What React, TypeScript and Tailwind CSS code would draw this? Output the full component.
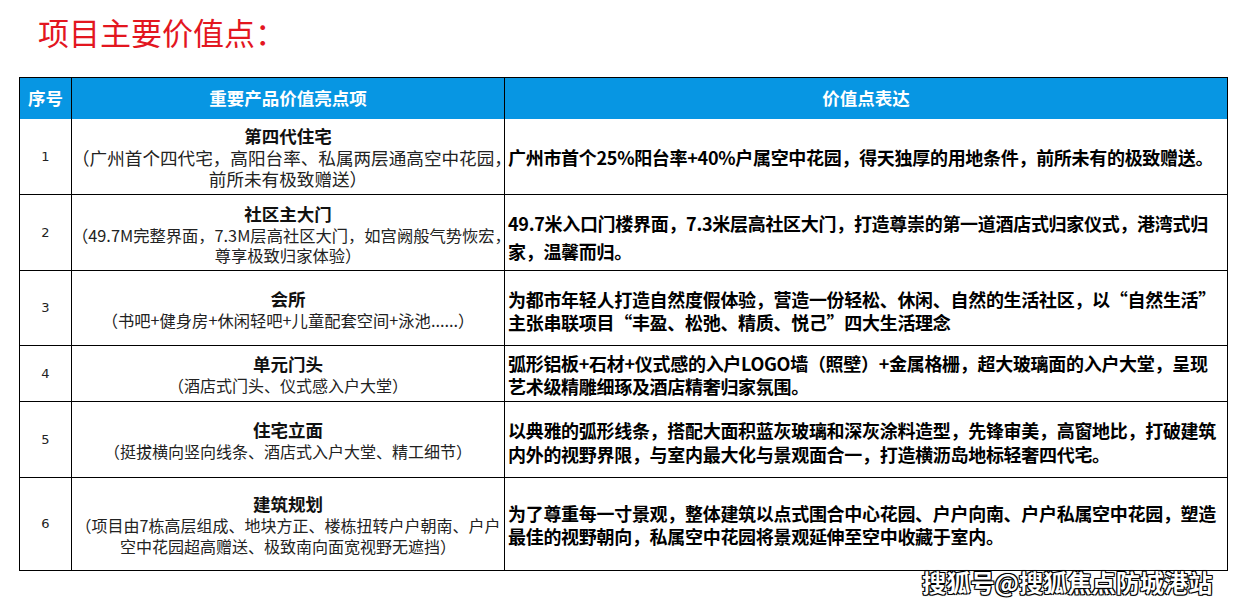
import React from "react";

const cjk = "font-['Noto_Sans_CJK_SC','Noto_Sans',sans-serif]";

type Row = {
  no: string;
  h: string;
  title: string;
  sub: string[];
  subSize: string;
  desc: string[];
  descLead: string;
  descPad: string;
};

const rows: Row[] = [
  {
    no: "1",
    h: "h-[76px]",
    title: "第四代住宅",
    sub: ["（广州首个四代宅，高阳台率、私属两层通高空中花园，", "前所未有极致赠送）"],
    subSize: "text-[17.6px] leading-[21px]",
    desc: ["广州市首个25%阳台率+40%户属空中花园，得天独厚的用地条件，前所未有的极致赠送。"],
    descLead: "leading-[24px]",
    descPad: "pt-[2px]",
  },
  {
    no: "2",
    h: "h-[76px]",
    title: "社区主大门",
    sub: ["（49.7M完整界面，7.3M层高社区大门，如宫阙般气势恢宏，", "尊享极致归家体验）"],
    subSize: "text-[16.3px] leading-[20px]",
    desc: ["49.7米入口门楼界面，7.3米层高社区大门，打造尊崇的第一道酒店式归家仪式，港湾式归", "家，温馨而归。"],
    descLead: "leading-[28px]",
    descPad: "pt-[8px]",
  },
  {
    no: "3",
    h: "h-[75px]",
    title: "会所",
    sub: ["（书吧+健身房+休闲轻吧+儿童配套空间+泳池......）"],
    subSize: "text-[16.3px] leading-[21px]",
    desc: ["为都市年轻人打造自然度假体验，营造一份轻松、休闲、自然的生活社区，以“自然生活”", "主张串联项目“丰盈、松弛、精质、悦己”四大生活理念"],
    descLead: "leading-[23px]",
    descPad: "pt-[6px]",
  },
  {
    no: "4",
    h: "h-[56px]",
    title: "单元门头",
    sub: ["（酒店式门头、仪式感入户大堂）"],
    subSize: "text-[16px] leading-[21px]",
    desc: ["弧形铝板+石材+仪式感的入户LOGO墙（照壁）+金属格栅，超大玻璃面的入户大堂，呈现", "艺术级精雕细琢及酒店精奢归家氛围。"],
    descLead: "leading-[23px]",
    descPad: "pt-[3px]",
  },
  {
    no: "5",
    h: "h-[76px]",
    title: "住宅立面",
    sub: ["（挺拔横向竖向线条、酒店式入户大堂、精工细节）"],
    subSize: "text-[16px] leading-[21px]",
    desc: ["以典雅的弧形线条，搭配大面积蓝灰玻璃和深灰涂料造型，先锋审美，高窗地比，打破建筑", "内外的视野界限，与室内最大化与景观面合一，打造横沥岛地标轻奢四代宅。"],
    descLead: "leading-[24px]",
    descPad: "pt-[4px]",
  },
  {
    no: "6",
    h: "h-[93px]",
    title: "建筑规划",
    sub: ["（项目由7栋高层组成、地块方正、楼栋扭转户户朝南、户户", "空中花园超高赠送、极致南向面宽视野无遮挡）"],
    subSize: "text-[16px] leading-[21px]",
    desc: ["为了尊重每一寸景观，整体建筑以点式围合中心花园、户户向南、户户私属空中花园，塑造", "最佳的视野朝向，私属空中花园将景观延伸至空中收藏于室内。"],
    descLead: "leading-[23px]",
    descPad: "pt-[1px]",
  },
];

export default function App() {
  return (
    <div className={`relative w-[1243px] h-[608px] bg-white overflow-hidden ${cjk}`}>
      <div className="h-[77px] pl-[38px] pt-[12px]">
        <div className="text-[31px] leading-[40px] text-[#e3161f] whitespace-nowrap">
          项目主要价值点：
        </div>
      </div>
      <div className="pl-[19px]">
        <table className="table-fixed border-collapse w-[1208px]">
          <colgroup>
            <col className="w-[52px]" />
            <col className="w-[433px]" />
            <col className="w-[723px]" />
          </colgroup>
          <thead>
            <tr className="h-[41px] bg-[#0796e3] text-white font-bold text-[17.5px]">
              <th className="border border-black border-b-0 text-center align-middle p-0 leading-[22px]">序号</th>
              <th className="border border-black border-b-0 text-center align-middle p-0 leading-[22px]">重要产品价值亮点项</th>
              <th className="border border-black border-b-0 text-center align-middle p-0 leading-[22px]">价值点表达</th>
            </tr>
          </thead>
          <tbody>
            {rows.map((r, i) => (
              <tr key={r.no} className={r.h}>
                <td className={`border border-black ${i === 0 ? "border-t-0" : ""} p-0 text-center align-middle text-[13px] text-[#222] font-['DejaVu_Sans',sans-serif]`}>
                  {r.no}
                </td>
                <td className={`border border-black ${i === 0 ? "border-t-0" : ""} p-0 text-center align-middle`}>
                  <div className="pt-[2px]">
                    <div className="text-[17.5px] leading-[22px] font-bold text-[#111] whitespace-nowrap">{r.title}</div>
                    {r.sub.map((s) => (
                      <div key={s} className={`${r.subSize} text-[#222] whitespace-nowrap`}>
                        {s}
                      </div>
                    ))}
                  </div>
                </td>
                <td className={`border border-black ${i === 0 ? "border-t-0" : ""} p-0 pl-[3px] text-left align-middle`}>
                  <div className={`${r.descPad} text-[18px] ${r.descLead} font-bold text-black whitespace-nowrap tracking-[-0.3px]`}>
                    {r.desc.map((d) => (
                      <div key={d}>{d}</div>
                    ))}
                  </div>
                </td>
              </tr>
            ))}
          </tbody>
        </table>
      </div>
      <div className="absolute left-[922px] top-[567px] text-[24.2px] leading-[30px] font-bold text-white whitespace-nowrap [text-shadow:-1px_-1px_0_#000,1px_-1px_0_#000,-1px_1px_0_#000,1px_1px_0_#000,0_0_2px_#000]">
        搜狐号@搜狐焦点防城港站
      </div>
    </div>
  );
}
